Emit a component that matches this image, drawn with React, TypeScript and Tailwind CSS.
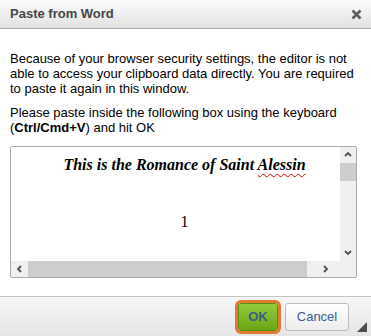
import React from 'react';

function ScrollArrow({ dir }: { dir: 'up' | 'down' | 'left' | 'right' }) {
    const paths: Record<string, string> = {
        up: 'M1 5 L4 2 L7 5',
        down: 'M1 2 L4 5 L7 2',
        left: 'M5 1 L2 4 L5 7',
        right: 'M2 1 L5 4 L2 7',
    };
    return (
        <svg width="8" height="8" viewBox="0 0 8 8">
            <path d={paths[dir]} fill="none" stroke="#505050" strokeWidth="1.8" />
        </svg>
    );
}

export default function App() {
    return (
        <div
            className="w-[371px] h-[336px] bg-white flex flex-col overflow-hidden"
            style={{ fontFamily: '"Liberation Sans", Arial, sans-serif' }}
        >
            {/* title bar */}
            <div className="h-[29px] shrink-0 flex items-center justify-between pl-[10px] pr-[8px] bg-gradient-to-b from-[#fbfbfb] to-[#e2e2e2] border-b border-[#a8a8a8]">
                <span className="text-[13px] font-bold text-[#474747]">Paste from Word</span>
                <svg width="11" height="11" viewBox="0 0 11 11" className="mr-[1px]">
                    <path d="M1.5 1.5 L9.5 9.5 M9.5 1.5 L1.5 9.5" stroke="#5c5c5c" strokeWidth="2.6" />
                </svg>
            </div>

            {/* body */}
            <div className="flex-1 px-[10px] pt-[22px] text-[13px] leading-[15px] text-black">
                <p>
                    Because of your browser security settings, the editor is not able to access your clipboard data
                    directly. You are required to paste it again in this window.
                </p>
                <div className="mt-[9px]">
                    <p>Please paste inside the following box using the keyboard</p>
                    <p className="flex">
                        <span>(</span>
                        <b>Ctrl/Cmd+V</b>
                        <span className="whitespace-pre">) and hit OK</span>
                    </p>
                </div>

                <div className="mt-[11px] w-[347px] h-[132px] border border-[#aaaaaa] rounded-[2px] flex flex-col">
                    <div className="flex-1 flex min-h-0">
                        <div
                            className="flex-1 pl-[18px] text-center text-black"
                            style={{ fontFamily: '"Liberation Serif", "Times New Roman", serif' }}
                        >
                            <p className="mt-[8px] text-[16px] leading-[20px] font-bold italic">
                                This is the Romance of Saint{' '}
                                <span className="underline decoration-wavy decoration-[#e00000] decoration-1 underline-offset-[3px]">
                                    Alessin
                                </span>
                            </p>
                            <p className="mt-[37px] text-[16px] leading-[20px]">1</p>
                        </div>
                        <div className="w-[16px] bg-[#f0f0f0] flex flex-col items-center">
                            <div className="h-[16px] flex items-center justify-center">
                                <ScrollArrow dir="up" />
                            </div>
                            <div className="w-full h-[18px] bg-[#cdcdcd]" />
                            <div className="flex-1" />
                            <div className="h-[16px] flex items-center justify-center">
                                <ScrollArrow dir="down" />
                            </div>
                        </div>
                    </div>
                    <div className="h-[16px] flex bg-[#f0f0f0]">
                        <div className="w-[17px] flex items-center justify-center">
                            <ScrollArrow dir="left" />
                        </div>
                        <div className="w-[279px] bg-[#cdcdcd]" />
                        <div className="flex-1 flex items-center justify-center pr-[12px]">
                            <ScrollArrow dir="right" />
                        </div>
                    </div>
                </div>
            </div>

            {/* footer */}
            <div className="relative h-[40px] shrink-0 border-t border-[#c4c4c4] bg-gradient-to-b from-[#f6f6f6] to-[#e6e6e6] flex items-center justify-end pr-[22px] gap-[4px]">
                <div className="rounded-[6px] border-[3px] border-[#e07a2e] p-0">
                    <button className="w-[40px] h-[28px] rounded-[3px] border border-[#5d8d16] bg-gradient-to-b from-[#93cc3c] to-[#6ba412] text-[13px] font-bold text-[#3d5f84]">
                        OK
                    </button>
                </div>
                <button className="w-[64px] h-[28px] rounded-[3px] border border-[#bcbcbc] bg-gradient-to-b from-[#ffffff] to-[#ececec] text-[13px] text-[#3a5e9a]">
                    Cancel
                </button>
                <svg width="10" height="10" viewBox="0 0 10 10" className="absolute right-[4px] bottom-[4px]">
                    <path d="M10 0 L10 10 L0 10 Z" fill="#4d4d4d" />
                </svg>
            </div>
        </div>
    );
}
